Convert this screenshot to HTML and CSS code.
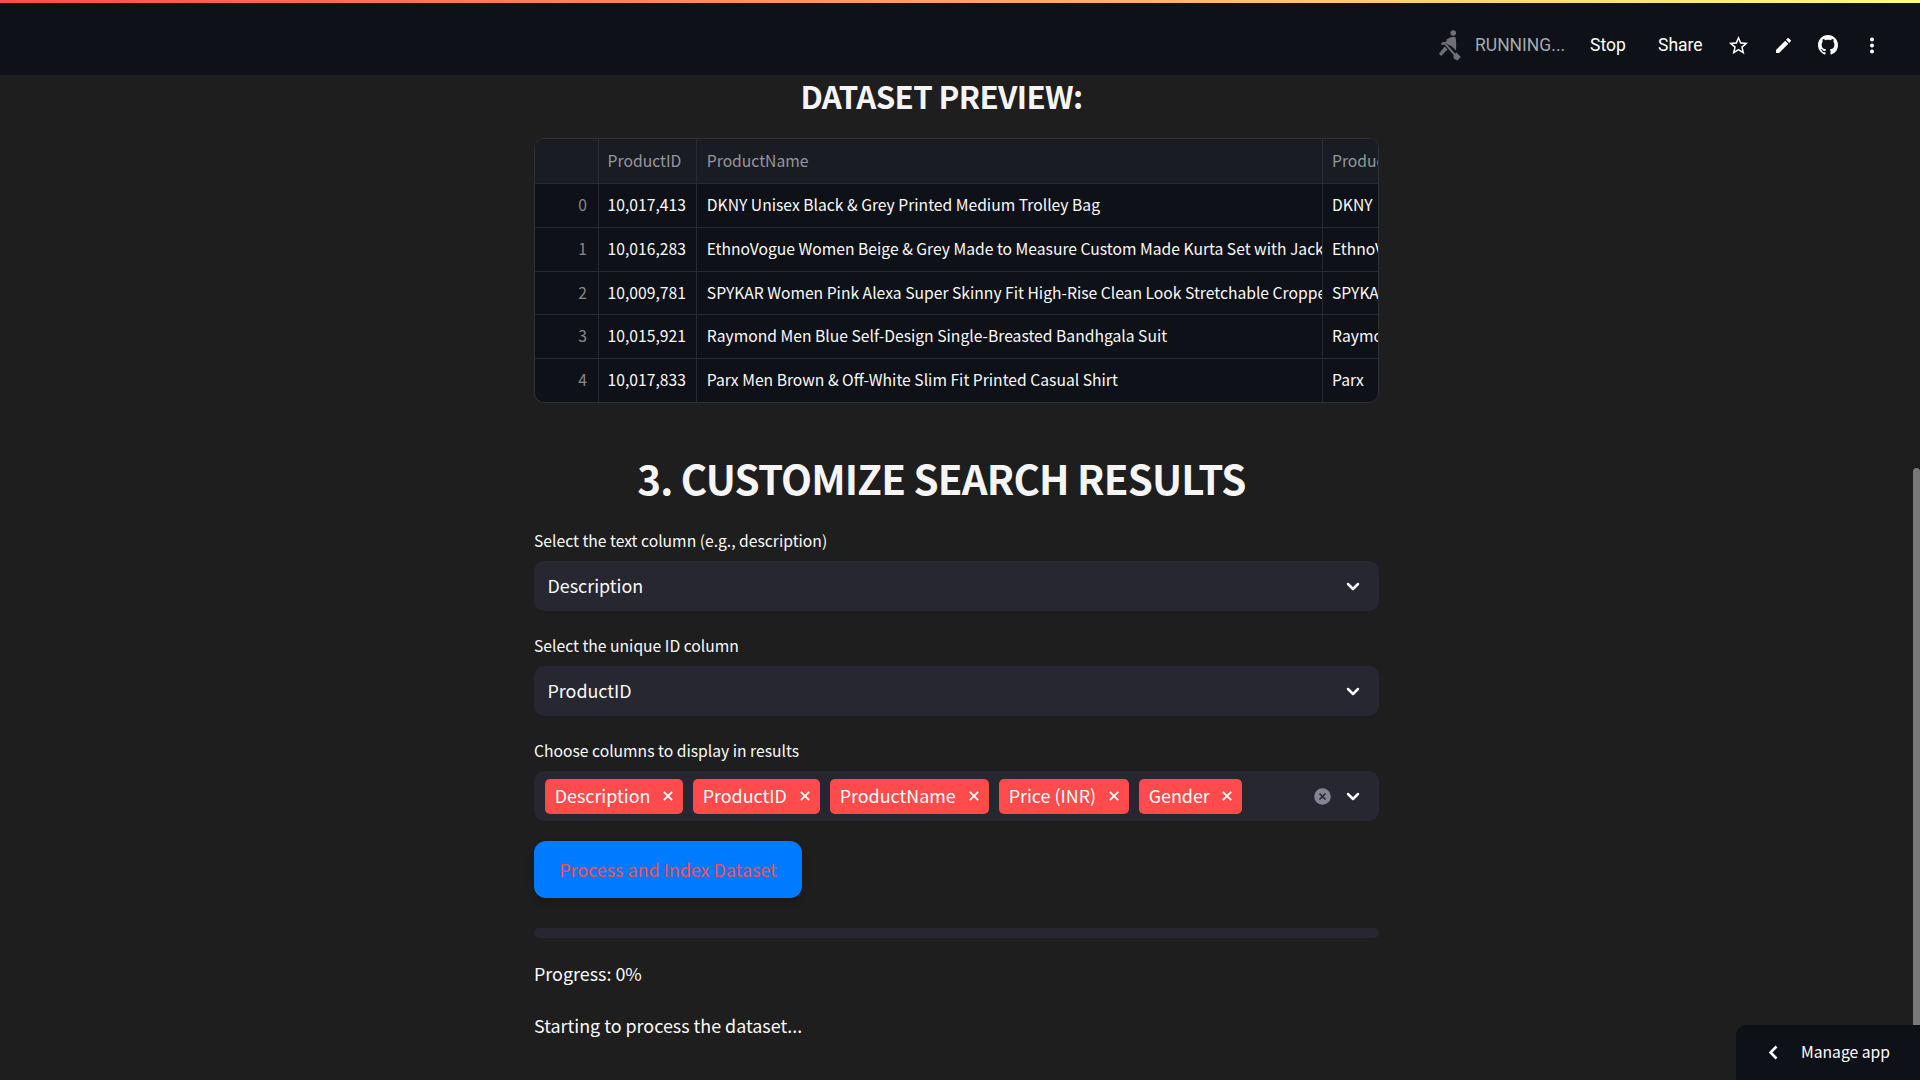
FILE: index.html
```html
<!DOCTYPE html>
<html lang="en">
<head>
<meta charset="utf-8">
<title>Dataset Search</title>
<link rel="stylesheet" href="styles.css">
</head>
<body>
<header class="toolbar">
  <svg class="runner" viewBox="0 0 22 31"><circle cx="14.2" cy="3" r="2.8"/><path d="M7.4 9.6Q13 5.4 16.4 7.2Q17.6 11 17 20.4L12 15.8L7.8 14.6L2.4 14.9L2.6 12.6L7.6 11.6Z"/><path d="M5.6 16.6L8.6 19.6L2.2 26L0 23.8Z"/><path d="M7 13.4L17.4 24.6" class="oar-gap"/><path d="M6.4 14.2L16 25" class="oar"/><path d="M14.5 25L17.6 22.4L21.8 27L18.4 30.4L14.5 28.4Z"/></svg>
  <span class="status">RUNNING...</span>
  <span class="action stop">Stop</span>
  <span class="action share">Share</span>
  <svg class="icon star" viewBox="0 0 24 24"><path d="M22 9.24l-7.19-.62L12 2 9.19 8.63 2 9.24l5.46 4.73L5.82 21 12 17.27 18.18 21l-1.63-7.03L22 9.24zM12 15.4l-3.76 2.27 1-4.28-3.32-2.88 4.38-.38L12 6.1l1.71 4.04 4.38.38-3.32 2.88 1 4.28L12 15.4z"/></svg>
  <svg class="icon pencil" viewBox="0 0 18 18"><path d="M0 14.25V18h3.75L14.81 6.94l-3.75-3.75zM17.71 4.04a1 1 0 0 0 0-1.41L15.37.29a1 1 0 0 0-1.41 0l-1.83 1.83 3.75 3.75z"/></svg>
  <svg class="icon github" viewBox="0 0 16 16"><path d="M8 0C3.58 0 0 3.58 0 8c0 3.54 2.29 6.53 5.47 7.59.4.07.55-.17.55-.38 0-.19-.01-.82-.01-1.49-2.01.37-2.53-.49-2.69-.94-.09-.23-.48-.94-.82-1.13-.28-.15-.68-.52-.01-.53.63-.01 1.08.58 1.23.82.72 1.21 1.87.87 2.33.66.07-.52.28-.87.51-1.07-1.78-.2-3.64-.89-3.64-3.95 0-.87.31-1.59.82-2.15-.08-.2-.36-1.02.08-2.12 0 0 .67-.21 2.2.82.64-.18 1.32-.27 2-.27s1.36.09 2 .27c1.53-1.04 2.2-.82 2.2-.82.44 1.1.16 1.92.08 2.12.51.56.82 1.27.82 2.15 0 3.07-1.87 3.75-3.65 3.95.29.25.54.73.54 1.48 0 1.07-.01 1.93-.01 2.2 0 .21.15.46.55.38A8.01 8.01 0 0 0 16 8c0-4.42-3.58-8-8-8z"/></svg>
  <svg class="icon more" viewBox="0 0 4 16"><circle cx="2" cy="2" r="2"/><circle cx="2" cy="8" r="2"/><circle cx="2" cy="14" r="2"/></svg>
</header>
<main class="content">
  <h3 class="preview-title">DATASET PREVIEW:</h3>
  <div class="grid">
    <div class="row head"><span class="idx"></span><span class="pid">ProductID</span><span class="name">ProductName</span><span class="brand">Produc</span></div>
    <div class="row"><span class="idx">0</span><span class="pid">10,017,413</span><span class="name">DKNY Unisex Black &amp; Grey Printed Medium Trolley Bag</span><span class="brand">DKNY</span></div>
    <div class="row"><span class="idx">1</span><span class="pid">10,016,283</span><span class="name">EthnoVogue Women Beige &amp; Grey Made to Measure Custom Made Kurta Set with Jack</span><span class="brand">EthnoV</span></div>
    <div class="row"><span class="idx">2</span><span class="pid">10,009,781</span><span class="name">SPYKAR Women Pink Alexa Super Skinny Fit High-Rise Clean Look Stretchable Croppe</span><span class="brand">SPYKA</span></div>
    <div class="row"><span class="idx">3</span><span class="pid">10,015,921</span><span class="name">Raymond Men Blue Self-Design Single-Breasted Bandhgala Suit</span><span class="brand">Raymo</span></div>
    <div class="row"><span class="idx">4</span><span class="pid">10,017,833</span><span class="name">Parx Men Brown &amp; Off-White Slim Fit Printed Casual Shirt</span><span class="brand">Parx</span></div>
  </div>
  <h2 class="section-title">3. CUSTOMIZE SEARCH RESULTS</h2>
  <div class="field">
    <label class="label">Select the text column (e.g., description)</label>
    <div class="select"><span class="value">Description</span><svg class="chevron" viewBox="0 0 14 9"><path d="M2 2l5 5 5-5"/></svg></div>
  </div>
  <div class="field">
    <label class="label">Select the unique ID column</label>
    <div class="select"><span class="value">ProductID</span><svg class="chevron" viewBox="0 0 14 9"><path d="M2 2l5 5 5-5"/></svg></div>
  </div>
  <div class="field">
    <label class="label">Choose columns to display in results</label>
    <div class="select multi">
      <span class="tag t1">Description<svg class="x" viewBox="0 0 10 10"><path d="M.8.8l8.4 8.4M9.2.8L.8 9.2"/></svg></span>
      <span class="tag t2">ProductID<svg class="x" viewBox="0 0 10 10"><path d="M.8.8l8.4 8.4M9.2.8L.8 9.2"/></svg></span>
      <span class="tag t3">ProductName<svg class="x" viewBox="0 0 10 10"><path d="M.8.8l8.4 8.4M9.2.8L.8 9.2"/></svg></span>
      <span class="tag t4">Price (INR)<svg class="x" viewBox="0 0 10 10"><path d="M.8.8l8.4 8.4M9.2.8L.8 9.2"/></svg></span>
      <span class="tag t5">Gender<svg class="x" viewBox="0 0 10 10"><path d="M.8.8l8.4 8.4M9.2.8L.8 9.2"/></svg></span>
      <svg class="clear" viewBox="0 0 17 17"><circle cx="8.5" cy="8.5" r="8.3"/><path d="M5.5 5.5l6 6M11.5 5.5l-6 6"/></svg>
      <svg class="chevron" viewBox="0 0 14 9"><path d="M2 2l5 5 5-5"/></svg>
    </div>
  </div>
  <button class="process">Process and Index Dataset</button>
  <div class="progress"></div>
  <p class="text">Progress: 0%</p>
  <p class="text">Starting to process the dataset...</p>
</main>
<div class="scrollbar"></div>
<div class="manage"><svg class="back" viewBox="0 0 10 15"><path d="M8.5 1.5l-6 6 6 6"/></svg><span class="manage-label">Manage app</span></div>
</body>
</html>
```
FILE: styles.css
```css
* { box-sizing: border-box; }
body {
  margin: 0;
  height: 1080px;
  overflow: hidden;
  position: relative;
  background: #1e1e1e;
  color: #fafafa;
  font-family: "Noto Sans CJK SC", sans-serif;
  font-size: 17.9px;
}
.toolbar {
  height: 75px;
  padding-top: 12px;
  border-top: 3px solid;
  border-image: linear-gradient(90deg, #ff4b4b, #fffd80) 1;
  background: #0e1117;
  display: flex;
  align-items: center;
  font-family: Roboto, sans-serif;
  font-size: 17.5px;
  padding-left: 1439px;
}
.toolbar svg { flex: none; }
.runner { width: 22px; height: 31px; fill: #6e7074; }
.runner .oar { stroke: #6e7074; stroke-width: 2; }
.runner .oar-gap { stroke: #0e1117; stroke-width: 1; }
.status { width: 129px; padding-left: 14px; color: #a3a8b4; }
.action { color: #fff; }
.stop { width: 68px; }
.share { width: 69px; }
.icon { fill: #fff; }
.star { width: 23px; height: 23px; }
.pencil { width: 15px; height: 15px; margin-left: 25.5px; }
.github { width: 20px; height: 20px; margin-left: 27.5px; }
.more { width: 4px; height: 17px; margin-left: 32px; }

.content { width: 845px; margin-left: 534px; }
h2, h3 { margin: 0; padding-right: 30px; text-align: center; font-weight: 600; white-space: nowrap; color: #f5f5f5; }
.preview-title { font-size: 31.3px; line-height: 42px; height: 63px; letter-spacing: -.65px; }
.grid {
  height: 265px;
  border: 1px solid #303134;
  border-radius: 10px;
  overflow: hidden;
  background: #0e1117;
  font-size: 15.68px;
}
.row {
  display: grid;
  grid-template-columns: 64px 98px 626px 1fr;
  height: 43.75px;
  border-bottom: 1px solid #292b30;
  line-height: 41.6px;
}
.row:last-child { border-bottom: 0; }
.row span { overflow: hidden; white-space: nowrap; padding-left: 9px; border-right: 1px solid #292b30; }
.row .pid { padding-left: 8.6px; }
.row .name { padding-left: 9.8px; }
.row .brand { border-right: 0; }
.row .idx { text-align: right; padding: 0 11px 0 0; color: #86888c; }
.head { height: 45px; line-height: 44px; background: #1a1c24; color: #95979c; }
.section-title { margin-top: 48px; font-size: 40.3px; line-height: 54px; height: 78px; letter-spacing: -.82px; }
.field { height: 105px; }
.label { display: block; height: 32px; font-size: 15.68px; line-height: 23px; }
.field + .field + .field { height: 102px; }
.select {
  height: 50px;
  border-radius: 10px;
  background: #262730;
  display: flex;
  align-items: center;
  padding: 0 19px 0 13.5px;
}
.value { flex: 1; padding-bottom: 2px; }
.chevron { width: 14px; height: 9px; fill: none; stroke: #fafafa; stroke-width: 2.5; stroke-linecap: round; stroke-linejoin: round; }
.multi { padding-left: 11px; gap: 10px; }
.tag {
  height: 35px;
  display: flex;
  align-items: center;
  justify-content: space-between;
  padding: 0 10.5px 2px 9.7px;
  border-radius: 5px;
  background: #ff4b4b;
  color: #fff;
  white-space: nowrap;
}
.t1 { width: 138px; }
.t2 { width: 127px; }
.t3 { width: 159px; }
.t4 { width: 130px; }
.t5 { width: 103px; }
.x { width: 10px; height: 10px; margin-top: 2px; stroke: #fff; stroke-width: 1.8; }
.clear { width: 17px; height: 17px; margin-left: auto; margin-right: 5px; fill: #808495; stroke: #262730; stroke-width: 1.7; }
.clear circle { stroke: none; }
.process {
  display: block;
  width: 268px;
  height: 57px;
  padding: 0 0 2px;
  border: 0;
  border-radius: 12px;
  background: #007bff;
  color: #ff4b4b;
  font: inherit;
  box-shadow: 0 4px 8px rgba(0, 0, 0, .15);
}
.progress { height: 10px; margin: 30px 0 19px; border-radius: 5px; background: #262730; }
.text { margin: 0 0 20px; line-height: 32px; }
.scrollbar { position: absolute; right: 0; top: 468px; width: 7px; height: 620px; border-radius: 4px; background: #797979; }
.manage {
  position: absolute;
  right: 0;
  bottom: 0;
  width: 184px;
  height: 55px;
  padding-left: 32px;
  border-top-left-radius: 10px;
  background: #0e1117;
  color: #fff;
  display: flex;
  align-items: center;
  gap: 23px;
  font-size: 15.68px;
}
.manage-label { padding-bottom: 2px; }
.back { width: 10px; height: 15px; fill: none; stroke: #fff; stroke-width: 2.6; }
```
